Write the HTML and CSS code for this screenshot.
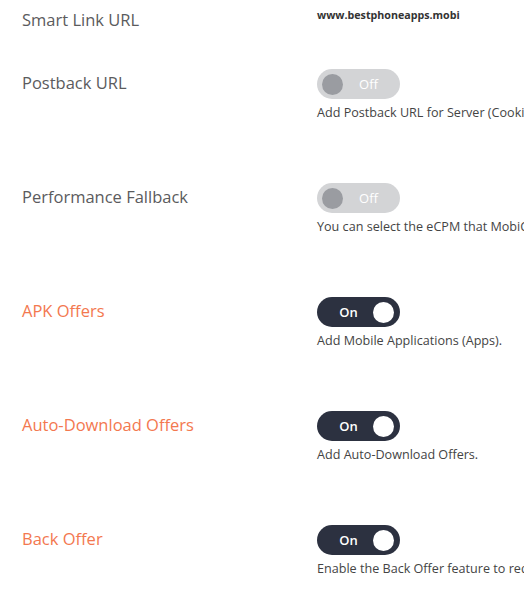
FILE: index.html
```html
<!DOCTYPE html>
<html lang="en">
  <head>
    <meta charset="UTF-8" />
    <meta name="viewport" content="width=device-width, initial-scale=1.0" />
    <title>Smart Link settings</title>
    <link rel="stylesheet" href="styles.css">
  </head>
  <body>
    <div class="settings">
      <div class="setting setting-first">
        <div class="label">Smart Link URL</div>
        <div class="value">www.bestphoneapps.mobi</div>
      </div>

      <div class="setting">
        <div class="label">Postback URL</div>
        <div class="control">
          <button class="toggle">Off</button>
          <p class="hint">Add Postback URL for Server (Cookie-less) tracking.</p>
        </div>
      </div>

      <div class="setting">
        <div class="label">Performance Fallback</div>
        <div class="control">
          <button class="toggle">Off</button>
          <p class="hint">You can select the eCPM that MobiCard should maintain for your traffic.</p>
        </div>
      </div>

      <div class="setting">
        <div class="label label-active">APK Offers</div>
        <div class="control">
          <button class="toggle toggle-on">On</button>
          <p class="hint">Add Mobile Applications (Apps).</p>
        </div>
      </div>

      <div class="setting">
        <div class="label label-active">Auto-Download Offers</div>
        <div class="control">
          <button class="toggle toggle-on">On</button>
          <p class="hint">Add Auto-Download Offers.</p>
        </div>
      </div>

      <div class="setting">
        <div class="label label-active">Back Offer</div>
        <div class="control">
          <button class="toggle toggle-on">On</button>
          <p class="hint">Enable the Back Offer feature to redirect users who leave.</p>
        </div>
      </div>
    </div>
  </body>
</html>
```

FILE: styles.css
```css
html,
body {
  margin: 0;
  padding: 0;
  background-color: #fff;
  overflow: hidden;
}

body {
  font-family: "Open Sans", Arial, sans-serif;
  color: #444;
}

.settings {
  padding: 5px 0 0 22px;
}

.setting {
  display: grid;
  grid-template-columns: 295px 1fr;
  min-height: 114px;
}

.setting-first {
  min-height: 64px;
}

.label {
  font-size: 16.5px;
  line-height: 27px;
  color: #5b5b5d;
  white-space: nowrap;
}

.setting-first .label {
  line-height: 30px;
}

.label-active {
  color: #f3784f;
}

.value {
  font-size: 10.7px;
  font-weight: bold;
  line-height: 20px;
  color: #333;
}

.control {
  min-width: 0;
}

/* pill switch */
.toggle {
  position: relative;
  display: block;
  width: 83px;
  height: 30px;
  border: none;
  border-radius: 15px;
  background-color: #d3d4d6;
  color: #fff;
  font-family: inherit;
  font-size: 13px;
  font-weight: normal;
  padding: 0 0 0 20px;
  cursor: pointer;
}

.toggle::before {
  content: "";
  position: absolute;
  top: 4.5px;
  left: 5px;
  width: 21px;
  height: 21px;
  border-radius: 50%;
  background-color: #9a9ca1;
}

.toggle-on {
  background-color: #2c3140;
  font-weight: 600;
  padding: 0 20px 0 0;
}

.toggle-on::before {
  left: auto;
  right: 6px;
  background-color: #fff;
}

.hint {
  margin: 5px 0 0;
  font-size: 12.6px;
  line-height: 18px;
  color: #444;
  white-space: nowrap;
}
```
